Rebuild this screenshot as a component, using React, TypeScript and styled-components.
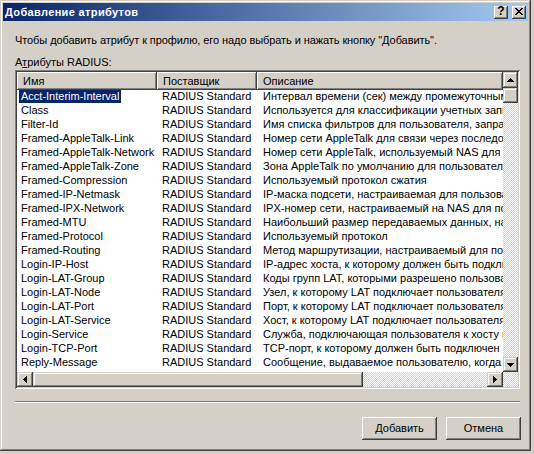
import React from 'react';
import styled, { createGlobalStyle } from 'styled-components';

const FACE = '#d4d0c8';

const Global = createGlobalStyle`
  html, body { margin: 0; padding: 0; background: ${FACE}; }
  body { font-family: "Liberation Sans", Arial, sans-serif; font-size: 11px; color: #000; }
  * { box-sizing: border-box; }
`;

const raised = `
  background: ${FACE};
  box-shadow: inset -1px -1px #404040, inset 1px 1px #ffffff, inset -2px -2px #808080, inset 2px 2px ${FACE};
`;

const scrollRaised = `
  background: ${FACE};
  box-shadow: inset -1px -1px #404040, inset 1px 1px ${FACE}, inset -2px -2px #808080, inset 2px 2px #ffffff;
`;

const checker = `
  background: repeating-conic-gradient(#ffffff 0 25%, ${FACE} 0 50%) 0 0 / 2px 2px;
`;

const Window = styled.div`
  width: 531px;
  height: 451px;
  padding: 3px;
  display: flex;
  flex-direction: column;
  background: ${FACE};
  box-shadow: inset -1px -1px #404040, inset 1px 1px ${FACE}, inset -2px -2px #808080, inset 2px 2px #ffffff;
`;

const TitleBar = styled.div`
  height: 18px;
  flex: 0 0 18px;
  display: flex;
  align-items: center;
  padding: 0 2px;
  background: linear-gradient(to right, #0a246a, #a6caf0);
  color: #ffffff;
  font-weight: bold;
  font-size: 11px;
`;

const Title = styled.span`
  flex: 1;
  white-space: nowrap;
  letter-spacing: 0.35px;
`;

const CaptionButtons = styled.div`
  display: flex;
  gap: 4px;
`;

const CaptionButton = styled.div`
  ${raised}
  width: 14px;
  height: 13px;
  display: flex;
  align-items: center;
  justify-content: center;
  color: #000;
  font-weight: bold;
  font-size: 12px;
  line-height: 13px;
  padding-bottom: 1px;
`;

const Body = styled.div`
  flex: 1;
  display: flex;
  flex-direction: column;
  padding: 13px 8px 8px 12px;
`;

const Intro = styled.div`
  line-height: 13px;
  height: 13px;
  white-space: nowrap;
  letter-spacing: -0.08px;
`;

const FieldLabel = styled.div`
  margin-top: 9px;
  line-height: 13px;
  height: 13px;
  white-space: nowrap;
`;

const ListView = styled.div`
  margin-top: 1px;
  height: 319px;
  padding: 2px;
  display: grid;
  grid-template-columns: 1fr 15px;
  grid-template-rows: 1fr 15px;
  background: ${FACE};
  box-shadow: inset 1px 1px #808080, inset -1px -1px #ffffff, inset 2px 2px #404040, inset -2px -2px ${FACE};
`;

const Viewport = styled.div`
  background: #ffffff;
  overflow: hidden;
  min-width: 0;
`;

const HeaderRow = styled.div`
  display: flex;
  height: 18px;
`;

const HeaderCell = styled.div<{ $w?: number }>`
  ${raised}
  flex: ${p => (p.$w ? `0 0 ${p.$w}px` : '1 0 auto')};
  height: 18px;
  line-height: 18px;
  padding-left: 6px;
  white-space: nowrap;
  overflow: hidden;
`;

const Row = styled.div`
  display: flex;
  height: 14px;
  line-height: 13px;
  white-space: nowrap;
`;

const NameCell = styled.div`
  flex: 0 0 140px;
  padding-left: 2px;
  overflow: hidden;
`;

const NameLabel = styled.span<{ $selected?: boolean }>`
  display: inline-block;
  height: 13px;
  padding: 0 2px;
  background: ${p => (p.$selected ? '#0a246a' : 'transparent')};
  color: ${p => (p.$selected ? '#ffffff' : '#000000')};
`;

const SubCell = styled.div<{ $w?: number }>`
  flex: ${p => (p.$w ? `0 0 ${p.$w}px` : '0 0 auto')};
  padding-left: ${p => (p.$w ? 5 : 6)}px;
  overflow: hidden;
`;

const VScroll = styled.div`
  display: flex;
  flex-direction: column;
  ${checker}
`;

const HScroll = styled.div`
  display: flex;
  ${checker}
  min-width: 0;
`;

const ArrowButton = styled.div<{ $w: number; $h: number }>`
  ${scrollRaised}
  flex: 0 0 auto;
  width: ${p => p.$w}px;
  height: ${p => p.$h}px;
  display: flex;
  align-items: center;
  justify-content: center;
`;

const Thumb = styled.div<{ $w: number; $h: number }>`
  ${scrollRaised}
  flex: 0 0 auto;
  width: ${p => p.$w}px;
  height: ${p => p.$h}px;
`;

const Track = styled.div`
  flex: 1;
`;

const Corner = styled.div`
  ${checker}
`;

const Separator = styled.div`
  margin-top: 12px;
  height: 2px;
  border-top: 1px solid #808080;
  border-bottom: 1px solid #ffffff;
`;

const ButtonRow = styled.div`
  margin-top: 14px;
  margin-right: -1px;
  display: flex;
  justify-content: flex-end;
  gap: 9px;
`;

const PushButton = styled.div`
  ${raised}
  width: 75px;
  height: 23px;
  display: flex;
  align-items: center;
  justify-content: center;
  line-height: 13px;
  padding-bottom: 1px;
`;

const Arrow: React.FC<{ dir: 'up' | 'down' | 'left' | 'right' }> = ({ dir }) => {
  const horizontal = dir === 'left' || dir === 'right';
  const w = horizontal ? 4 : 7;
  const h = horizontal ? 7 : 4;
  const pts = {
    up: '3.5,0 7,4 0,4',
    down: '0,0 7,0 3.5,4',
    left: '4,0 4,7 0,3.5',
    right: '0,0 4,3.5 0,7',
  }[dir];
  return (
    <svg width={w} height={h} viewBox={`0 0 ${w} ${h}`} shapeRendering="crispEdges">
      <polygon points={pts} fill="#000" />
    </svg>
  );
};

const CloseGlyph = () => (
  <svg width="8" height="7" viewBox="0 0 8 7" shapeRendering="crispEdges">
    <path
      d="M0 0h2v1h-2z M6 0h2v1h-2z M1 1h2v1h-2z M5 1h2v1h-2z M2 2h4v1h-4z M3 3h2v1h-2z M2 4h4v1h-4z M1 5h2v1h-2z M5 5h2v1h-2z M0 6h2v1h-2z M6 6h2v1h-2z"
      fill="#000"
    />
  </svg>
);

type Attr = { name: string; desc: string };

const attrs: Attr[] = [
  { name: 'Acct-Interim-Interval', desc: 'Интервал времени (сек) между промежуточными обновлениями' },
  { name: 'Class', desc: 'Используется для классификации учетных записей' },
  { name: 'Filter-Id', desc: 'Имя списка фильтров для пользователя, запрашивающего проверку' },
  { name: 'Framed-AppleTalk-Link', desc: 'Номер сети AppleTalk для связи через последовательный канал' },
  { name: 'Framed-AppleTalk-Network', desc: 'Номер сети AppleTalk, используемый NAS для выделения' },
  { name: 'Framed-AppleTalk-Zone', desc: 'Зона AppleTalk по умолчанию для пользователя' },
  { name: 'Framed-Compression', desc: 'Используемый протокол сжатия' },
  { name: 'Framed-IP-Netmask', desc: 'IP-маска подсети, настраиваемая для пользователя' },
  { name: 'Framed-IPX-Network', desc: 'IPX-номер сети, настраиваемый на NAS для пользователя' },
  { name: 'Framed-MTU', desc: 'Наибольший размер передаваемых данных, настраиваемый' },
  { name: 'Framed-Protocol', desc: 'Используемый протокол' },
  { name: 'Framed-Routing', desc: 'Метод маршрутизации, настраиваемый для пользователя' },
  { name: 'Login-IP-Host', desc: 'IP-адрес хоста, к которому должен быть подключен пользователь' },
  { name: 'Login-LAT-Group', desc: 'Коды групп LAT, которыми разрешено пользоваться' },
  { name: 'Login-LAT-Node', desc: 'Узел, к которому LAT подключает пользователя' },
  { name: 'Login-LAT-Port', desc: 'Порт, к которому LAT подключает пользователя' },
  { name: 'Login-LAT-Service', desc: 'Хост, к которому LAT подключает пользователя' },
  { name: 'Login-Service', desc: 'Служба, подключающая пользователя к хосту или службе' },
  { name: 'Login-TCP-Port', desc: 'TCP-порт, к которому должен быть подключен пользователь' },
  { name: 'Reply-Message', desc: 'Сообщение, выдаваемое пользователю, когда он подключается' },
];

export default function App() {
  return (
    <>
      <Global />
      <Window>
        <TitleBar>
          <Title>Добавление атрибутов</Title>
          <CaptionButtons>
            <CaptionButton>?</CaptionButton>
            <CaptionButton>
              <CloseGlyph />
            </CaptionButton>
          </CaptionButtons>
        </TitleBar>
        <Body>
          <Intro>Чтобы добавить атрибут к профилю, его надо выбрать и нажать кнопку "Добавить".</Intro>
          <FieldLabel>
            А<u>т</u>рибуты RADIUS:
          </FieldLabel>
          <ListView>
            <Viewport>
              <HeaderRow>
                <HeaderCell $w={140}>Имя</HeaderCell>
                <HeaderCell $w={100}>Поставщик</HeaderCell>
                <HeaderCell>Описание</HeaderCell>
              </HeaderRow>
              {attrs.map((a, i) => (
                <Row key={a.name}>
                  <NameCell>
                    <NameLabel $selected={i === 0}>{a.name}</NameLabel>
                  </NameCell>
                  <SubCell $w={100}>RADIUS Standard</SubCell>
                  <SubCell>{a.desc}</SubCell>
                </Row>
              ))}
            </Viewport>
            <VScroll>
              <ArrowButton $w={15} $h={16}>
                <Arrow dir="up" />
              </ArrowButton>
              <Thumb $w={15} $h={15} />
              <Track />
              <ArrowButton $w={15} $h={15}>
                <Arrow dir="down" />
              </ArrowButton>
            </VScroll>
            <HScroll>
              <ArrowButton $w={16} $h={15}>
                <Arrow dir="left" />
              </ArrowButton>
              <Thumb $w={330} $h={15} />
              <Track />
              <ArrowButton $w={16} $h={15}>
                <Arrow dir="right" />
              </ArrowButton>
            </HScroll>
            <Corner />
          </ListView>
          <Separator />
          <ButtonRow>
            <PushButton>
              <span>
                <u>Д</u>обавить
              </span>
            </PushButton>
            <PushButton>Отмена</PushButton>
          </ButtonRow>
        </Body>
      </Window>
    </>
  );
}
